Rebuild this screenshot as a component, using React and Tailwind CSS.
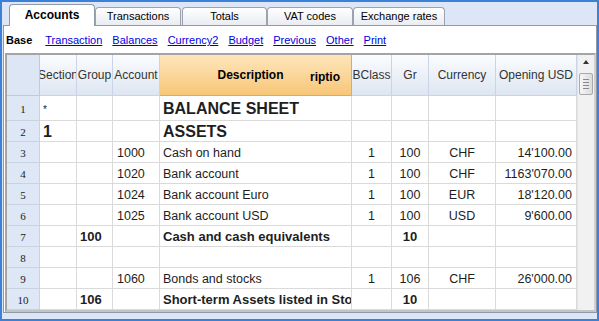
import React from 'react';

const cols = [
  { key: 'sec', label: 'Section', w: 'w-[37px]', align: 'justify-start pl-[3px]' },
  { key: 'grp', label: 'Group', w: 'w-[36px]', align: 'justify-start pl-[3px]' },
  { key: 'acc', label: 'Account', w: 'w-[47px]', align: 'justify-start pl-[4px]' },
  { key: 'desc', label: 'Description', w: 'w-[192px]', align: 'justify-start pl-[3px]' },
  { key: 'bc', label: 'BClass', w: 'w-[40px]', align: 'justify-center' },
  { key: 'gr', label: 'Gr', w: 'w-[37px]', align: 'justify-center' },
  { key: 'cur', label: 'Currency', w: 'w-[67px]', align: 'justify-center' },
  { key: 'open', label: 'Opening USD', w: 'w-[81px]', align: 'justify-end pr-[4px]' },
];

const rows = [
  { n: 1, h: 'h-[25px]', sec: '*', desc: 'BALANCE SHEET', big: true },
  { n: 2, h: 'h-[21px]', sec: '1', desc: 'ASSETS', big: true },
  { n: 3, acc: '1000', desc: 'Cash on hand', bc: '1', gr: '100', cur: 'CHF', open: "14'100.00" },
  { n: 4, acc: '1020', desc: 'Bank account', bc: '1', gr: '100', cur: 'CHF', open: "1163'070.00" },
  { n: 5, acc: '1024', desc: 'Bank account Euro', bc: '1', gr: '100', cur: 'EUR', open: "18'120.00" },
  { n: 6, acc: '1025', desc: 'Bank account USD', bc: '1', gr: '100', cur: 'USD', open: "9'600.00" },
  { n: 7, grp: '100', desc: 'Cash and cash equivalents', gr: '10', bold: true },
  { n: 8 },
  { n: 9, acc: '1060', desc: 'Bonds and stocks', bc: '1', gr: '106', cur: 'CHF', open: "26'000.00" },
  { n: 10, grp: '106', desc: 'Short-term Assets listed in Stock Exchange', gr: '10', bold: true },
];

const tabs = [
  { label: 'Transactions', cls: 'w-[86px]' },
  { label: 'Totals', cls: 'w-[85px] ml-[1px]' },
  { label: 'VAT codes', cls: 'w-[86px]' },
  { label: 'Exchange rates', cls: 'w-[92px]' },
];

const links = ['Transaction', 'Balances', 'Currency2', 'Budget', 'Previous', 'Other', 'Print'];

function Cell({ col, row }) {
  const v = row[col.key];
  let text = 'text-[12.5px]';
  if (row.big && (col.key === 'desc' || col.key === 'sec')) text = 'text-[16px] font-bold';
  else if (row.bold) text = 'text-[13px] font-bold';
  if (col.key === 'sec' && v === '*') text = 'text-[10px] self-start pt-[3px]';
  return (
    <div className={`${col.w} ${col.align} flex h-full items-center overflow-hidden whitespace-nowrap border-r border-b border-[#dadada] pt-[2px] ${text}`}>
      {v}
    </div>
  );
}

export default function App() {
  return (
    <div className="flex h-[321px] w-[599px] flex-col overflow-hidden border-2 border-[#3c80d8] bg-[#dce6f7] pl-[1px] font-['Liberation_Sans',Arial,sans-serif] text-[#1e1e1e]">
      <div className="relative z-10 flex h-[23px] items-end pl-[6px]">
        <div className="-mb-px flex h-[22px] w-[86px] items-center justify-center rounded-t-[4px] border border-b-0 border-[#8f9aa8] bg-white pb-[2px] text-[12px] font-bold text-black">
          Accounts
        </div>
        {tabs.map((t) => (
          <div
            key={t.label}
            className={`${t.cls} flex h-[18px] items-center justify-center rounded-t-[4px] border border-b-0 border-[#9aa3ae] bg-linear-to-b from-white to-[#e9ecf1] text-[11px] text-black`}
          >
            {t.label}
          </div>
        ))}
      </div>

      <div className="flex h-[288px] w-[594px] flex-col border border-[#8f9aa8] bg-white">
        <div className="flex h-[27px] items-center gap-[10px] pl-[2px] pt-[2px] text-[11px]">
          <span className="mr-[3px] font-bold text-black">Base</span>
          {links.map((l) => (
            <span key={l} className="text-[#0000e0] underline">
              {l}
            </span>
          ))}
        </div>

        <div className="ml-[1px] flex h-[259px] w-[591px] border-2 border-t-[#a4a4a4] border-l-[#a4a4a4] border-r-[#d0d0d0] border-b-[#c4c4c4]">
          <div className="flex w-[570px] flex-col overflow-hidden">
            <div className="flex h-[41px] shrink-0 text-[12px] text-[#333]">
              <div className="h-full w-[33px] border-r border-b border-[#bfcbdc] bg-[#dce6f4]" />
              {cols.map((c) =>
                c.key === 'desc' ? (
                  <div
                    key={c.key}
                    className="relative flex h-full w-[192px] items-center justify-center border-r border-b border-[#eda64a] bg-linear-to-b from-[#fde6bb] to-[#f8c677] pr-[10px] font-bold text-black"
                  >
                    Description
                    <span className="absolute right-[11px] top-[13px]">riptio</span>
                  </div>
                ) : (
                  <div
                    key={c.key}
                    className={`${c.w} flex h-full items-center justify-center overflow-hidden whitespace-nowrap border-r border-b border-[#c9d5e6] bg-linear-to-b from-[#fbfcfe] to-[#dde6f2]`}
                  >
                    {c.label}
                  </div>
                )
              )}
            </div>

            {rows.map((r) => (
              <div key={r.n} className={`flex shrink-0 ${r.h || 'h-[21px]'}`}>
                <div className="flex h-full w-[33px] items-center justify-center border-r border-b border-[#c9d3e0] bg-[#dde7f5] pt-[2px] font-['Liberation_Serif',serif] text-[11px] text-[#222]">
                  {r.n}
                </div>
                {cols.map((c) => (
                  <Cell key={c.key} col={c} row={r} />
                ))}
              </div>
            ))}
          </div>

          <div className="relative w-[17px] border-l border-[#e4e4e4] bg-[#f1f1f1]">
            <div className="absolute left-[5px] top-[5px] h-0 w-0 border-x-[3px] border-b-[4px] border-x-transparent border-b-[#333]" />
            <div className="absolute left-[1px] top-[18px] flex h-[22px] w-[14px] flex-col items-center justify-center gap-[2px] rounded-[2px] border border-[#a9a9a9] bg-linear-to-r from-[#f6f6f6] to-[#dcdcdc]">
              <div className="h-px w-[6px] bg-[#8a8a8a]" />
              <div className="h-px w-[6px] bg-[#8a8a8a]" />
              <div className="h-px w-[6px] bg-[#8a8a8a]" />
              <div className="h-px w-[6px] bg-[#8a8a8a]" />
            </div>
          </div>
        </div>
      </div>
    </div>
  );
}
